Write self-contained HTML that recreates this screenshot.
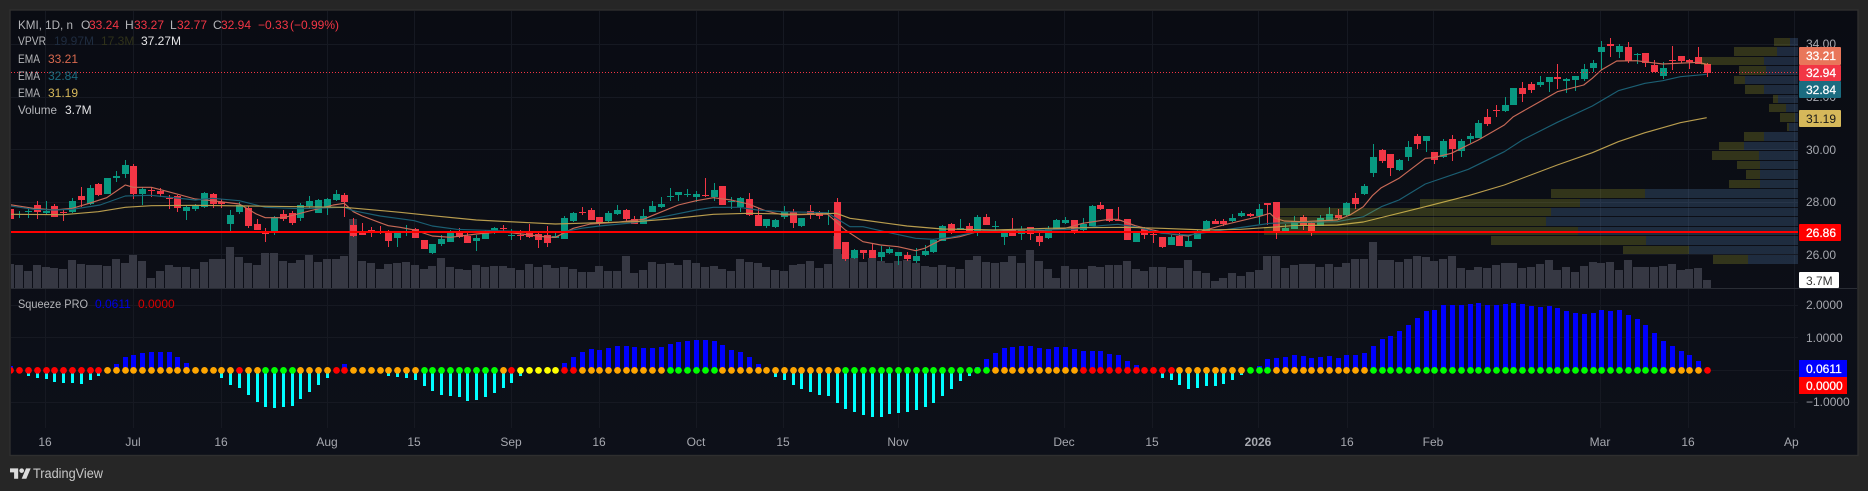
<!DOCTYPE html>
<html><head><meta charset="utf-8"><title>KMI chart</title>
<style>
html,body{margin:0;padding:0;background:#262626;width:1868px;height:491px;overflow:hidden}
svg{display:block}
text{font-family:"Liberation Sans",sans-serif;font-size:12px}
.a{fill:#a6a8af}
.l{fill:#b4b5b9}
.w{fill:#fff;stroke:#fff;stroke-width:.25}
</style></head>
<body>
<svg xmlns="http://www.w3.org/2000/svg" width="1868" height="491" viewBox="0 0 1868 491">
<defs>
<linearGradient id="bg" x1="0" y1="0" x2="0" y2="1"><stop offset="0" stop-color="#0a0c13"/><stop offset="1" stop-color="#0d1019"/></linearGradient>
<clipPath id="pane"><rect x="11" y="11" width="1846" height="444"/></clipPath>
</defs>
<rect width="1868" height="491" fill="#262626"/>
<rect x="10" y="10" width="1848" height="445.5" fill="url(#bg)" stroke="#2f2f2f" stroke-width="1.4"/>
<g id="grid" shape-rendering="crispEdges" stroke="#161922" stroke-width="1"></g>
<g id="main" clip-path="url(#pane)"></g>
<rect x="11" y="288" width="1846" height="1" fill="#2a2d35"/>
<line x1="11" x2="1798" y1="72.5" y2="72.5" stroke="#f23645" stroke-width="1" stroke-dasharray="1 2"/>
<rect x="11" y="231" width="1787" height="2" fill="#ff0000"/>
<g id="sub" clip-path="url(#pane)"></g>

<!-- Legend -->
<text x="18" y="29" class="l" textLength="55" lengthAdjust="spacingAndGlyphs">KMI, 1D, n</text>
<text x="81" y="29" class="l">O</text><text x="89" y="29" fill="#f23645">33.24</text>
<text x="125" y="29" class="l">H</text><text x="134" y="29" fill="#f23645">33.27</text>
<text x="170" y="29" class="l">L</text><text x="177" y="29" fill="#f23645">32.77</text>
<text x="213" y="29" class="l">C</text><text x="221" y="29" fill="#f23645">32.94</text>
<text x="258" y="29" fill="#f23645">−0.33</text><text x="290" y="29" fill="#f23645">(−0.99%)</text>
<text x="18" y="45" class="l" textLength="28" lengthAdjust="spacingAndGlyphs">VPVR</text>
<text x="54" y="45" fill="#1f2c40">19.97M</text><text x="101" y="45" fill="#30321a">17.3M</text><text x="141" y="45" fill="#e4e4e6">37.27M</text>
<text x="18" y="63" class="l" textLength="22" lengthAdjust="spacingAndGlyphs">EMA</text><text x="48" y="63" fill="#d8694f">33.21</text>
<text x="18" y="80" class="l" textLength="22" lengthAdjust="spacingAndGlyphs">EMA</text><text x="48" y="80" fill="#1b6c80">32.84</text>
<text x="18" y="97" class="l" textLength="22" lengthAdjust="spacingAndGlyphs">EMA</text><text x="48" y="97" fill="#d6b85a">31.19</text>
<text x="18" y="114" class="l" textLength="39" lengthAdjust="spacingAndGlyphs">Volume</text><text x="65" y="114" fill="#e4e4e6">3.7M</text>
<text x="18" y="308" class="l" textLength="70" lengthAdjust="spacingAndGlyphs">Squeeze PRO</text><text x="95" y="308" fill="#0000e6">0.0611</text><text x="138" y="308" fill="#d80000">0.0000</text>

<!-- Price axis -->
<text x="1806" y="48" class="a">34.00</text>
<text x="1806" y="101" class="a">32.00</text>
<text x="1806" y="154" class="a">30.00</text>
<text x="1806" y="206" class="a">28.00</text>
<text x="1806" y="259" class="a">26.00</text>
<rect x="1799" y="47" width="42" height="18" fill="#e9765a" rx="1"/><text x="1806" y="60" class="w">33.21</text>
<rect x="1799" y="65" width="42" height="16" fill="#f23645" rx="1"/><text x="1806" y="77" class="w">32.94</text>
<rect x="1799" y="81" width="42" height="17" fill="#1b6c80" rx="1"/><text x="1806" y="94" class="w">32.84</text>
<rect x="1799" y="110" width="42" height="17" fill="#d6b85a" rx="1"/><text x="1806" y="123" fill="#1a1a1a">31.19</text>
<rect x="1799" y="224" width="42" height="17" fill="#ff0000" rx="1"/><text x="1806" y="237" class="w">26.86</text>
<rect x="1799" y="272" width="40" height="16" fill="#ffffff" rx="1"/><text x="1806" y="285" fill="#333">3.7M</text>
<text x="1806" y="309" class="a">2.0000</text>
<text x="1806" y="342" class="a">1.0000</text>
<text x="1806" y="406" class="a">−1.0000</text>
<rect x="1799" y="360" width="48" height="17" fill="#0000ff"/><text x="1806" y="373" class="w">0.0611</text>
<rect x="1799" y="377" width="48" height="17" fill="#ff0000"/><text x="1806" y="390" class="w">0.0000</text>

<!-- Time axis -->
<g class="a" text-anchor="middle">
<text x="45" y="446" class="a">16</text>
<text x="133" y="446" class="a">Jul</text>
<text x="221" y="446" class="a">16</text>
<text x="327" y="446" class="a">Aug</text>
<text x="414" y="446" class="a">15</text>
<text x="511" y="446" class="a">Sep</text>
<text x="599" y="446" class="a">16</text>
<text x="696" y="446" class="a">Oct</text>
<text x="783" y="446" class="a">15</text>
<text x="898" y="446" class="a">Nov</text>
<text x="1064" y="446" class="a">Dec</text>
<text x="1152" y="446" class="a">15</text>
<text x="1258" y="446" class="a" font-weight="bold">2026</text>
<text x="1347" y="446" class="a">16</text>
<text x="1433" y="446" class="a">Feb</text>
<text x="1600" y="446" class="a">Mar</text>
<text x="1688" y="446" class="a">16</text>
</g>
<text x="1784" y="446" class="a">Ap</text>

<!-- Logo -->
<svg x="10" y="466" width="21" height="16.3" viewBox="0 0 36 28" fill="#dcdcdc"><path d="M14 22H7V11H0V4h14v18zM28 22h-8l7.5-18h8L28 22z"/><circle cx="20" cy="8" r="4"/></svg>
<text x="33" y="478" fill="#c8c8c8" style="font-size:13.5px" textLength="70" lengthAdjust="spacingAndGlyphs">TradingView</text>

<script>
(function(){
var NS="http://www.w3.org/2000/svg";
function el(p,n,a){var e=document.createElementNS(NS,n);for(var k in a)e.setAttribute(k,a[k]);p.appendChild(e);return e;}
function X(i){return Math.round(10.4+8.79*i);}
var grid=document.getElementById("grid"),main=document.getElementById("main"),sub=document.getElementById("sub");
[45,133,221,327,414,511,599,696,783,898,1064,1152,1258,1347,1433,1600,1688,1794].forEach(function(x){
 el(grid,"line",{x1:x+.5,x2:x+.5,y1:11,y2:288});el(grid,"line",{x1:x+.5,x2:x+.5,y1:289,y2:428});});
[44,97,149,202,254,305,337,370,402].forEach(function(y){el(grid,"line",{x1:11,x2:1798,y1:y+.5,y2:y+.5});});

/* volume */
var vols=[
[130,"402,405,423,405,411,414,417,390,402,405,405,408,387,399,375,393,444,423,405,411,411,417,396,387,387,351,381,399,405,369,369,393,399,390,375,396,387,387,378,267,393,399,417,402,399"],
[150,"336,345,357,348,324,351,357,360,345,351,348,348,354,360,342,351,345,354,351,357,366,366,348,363,363,318,369,360,336,342,339,345,330,339,351,348,357,363,327,336,339,351,360,363,345,342,333,354,342,258,312"],
[180,"234,246,234,243,249,243,240,249,258,261,255,261,267,240,228,246,249,246,228,249,210,243,267,294,258,267,267,258,261,255,255,243,267,273,261,261,264,264,240,273,279,303,294,279,288,276,270,228"],
[30,"678,714,705,702,702,711,702,711,699,687,687,636,690,690,696,687,678,681,693,687,678,714,720,711,714,705,699,699,714,711,702,690,720,711,726,708,696,699,696,720,690,711,711,711,708,702,720,717,714,750"]];
var gv=el(main,"g",{fill:"#363843","shape-rendering":"crispEdges"}),idx=0;
vols.forEach(function(s){s[1].split(",").forEach(function(v){var y=Math.round(s[0]+v/3);
 el(gv,"rect",{x:X(idx)-4,y:y,width:8,height:288-y});idx++;});});

/* candles: colour top bottom wickTop wickBottom */
var cs=[
[130,"r237,267,237,278 g251,255,243,265 g242,245,237,263 r225,245,213,266 g243,249,213,252 r228,260,222,262 r246,250,240,272 g213,245,205,250 r198,209,171,232 g174,222,165,225 r163,195,160,198 g144,192,144,192 g138,144,123,155 g105,132,90,144 r108,192,102,207 g178,192,171,225 r180,183,171,201 r183,192,174,201 r203,206,195,237 r198,234,195,246 g231,243,225,270 g226,237,222,243 g189,231,186,234 r192,222,189,234 r216,222,207,234 g255,282,240,303 g225,246,216,252 r234,288,228,294 r282,300,267,300 r309,312,294,336 g261,303,258,315 r252,267,240,273 r250,279,243,285 g225,264,219,273 g213,228,198,234 g210,249,207,249 g207,234,204,255 g192,210,180,213 r195,216,189,261 r285,318,264,321 r306,315,279,315 r300,306,291,321 r306,309,288,312 r309,333,300,351 g309,324,303,351"],
[150,"g245,247,225,258 r238,264,235,264 r270,297,270,297 g282,309,282,312 g267,282,255,288 g249,276,240,276 r249,261,234,264 r258,279,249,279 g264,273,255,303 g249,267,240,267 g234,249,231,252 r234,236,225,243 g255,258,237,270 r254,257,240,270 r249,261,222,264 r252,270,246,294 r255,279,228,291 g258,264,249,264 g204,267,198,267 g189,213,186,216 r186,189,171,195 r180,210,174,210 r201,219,201,228 g189,213,183,216 g180,192,165,195 r180,207,177,216 r207,222,198,222 g198,222,177,222 g168,186,153,186 g162,171,141,174 g138,141,114,153 g126,135,126,153 g132,135,117,141 g132,141,123,156 r135,138,84,141 g120,141,99,153 r108,165,108,165 g153,156,141,177 g144,171,141,186 r147,195,129,198 r195,228,174,228 g207,228,207,234 g210,231,207,234 g186,201,168,207 r186,219,177,234 g204,228,204,231 r183,195,165,207 r186,198,183,207 g189,192,180,225 r156,297,144,297"],
[180,"r186,237,186,243 g210,234,207,237 r210,219,210,237 r210,234,192,234 g216,231,198,243 g207,219,201,222 g216,228,216,255 r225,237,216,243 g228,243,205,249 g213,225,195,228 g180,216,177,219 g138,183,135,183 r132,156,129,162 g144,150,117,150 r138,153,129,156 g111,153,105,168 r111,135,102,135 g138,141,123,150 g156,171,150,195 r147,168,114,168 g147,162,138,180 r141,162,141,180 r168,186,156,198 g147,174,138,177 g120,150,117,150 g120,129,111,132 r120,156,120,162 g132,150,114,153 g78,138,75,138 r75,87,66,90 r87,123,87,126 r120,123,81,123 r117,180,117,180 g159,186,156,186 r147,165,141,177 r162,165,156,189 r171,201,171,204 g171,195,165,195 r168,198,159,198 g183,201,165,201 g159,177,150,177 g123,153,120,153 r123,132,117,132 r123,132,117,138 g114,123,102,126 g99,108,93,111 r102,108,99,111 g87,108,72,132 r69,75,69,135"],
[30,"r516,610,516,627 g594,603,582,603 g573,597,558,597 r561,588,555,600 r579,603,576,618 g564,588,555,588 g552,573,531,573 r555,564,537,570 g519,555,516,558 r504,522,489,537 g468,492,462,495 g381,429,342,441 r360,393,357,399 r372,414,372,438 g390,420,387,423 g351,381,333,393 r318,342,312,357 g318,333,318,366 r366,390,366,402 g333,381,327,384 r327,357,315,393 g333,363,327,381 g318,327,309,339 g279,324,270,324 r261,282,237,288 r240,243,225,261 g225,243,201,246 g174,225,174,225 r174,192,156,216 r162,180,156,189 g156,165,138,171 g141,156,141,186 r141,147,102,177 g147,152,144,189 g138,150,138,183 g117,147,102,153 g99,114,90,126 g51,66,33,120 r42,47,24,81 g48,66,42,84 r51,93,36,99 g72,75,69,102 r69,99,69,111 r105,126,90,126 g114,138,96,147 r90,93,48,120 r78,93,78,99 r90,96,87,117 r81,102,51,102 r102,129,99,141"]];
var gc=el(main,"g",{"shape-rendering":"crispEdges"});idx=0;
cs.forEach(function(s){s[1].split(" ").forEach(function(t){
 var c=t[0]=="g"?"#089981":"#f23645",p=t.slice(1).split(",").map(function(n){return Math.round(s[0]+n/3);}),x=X(idx);
 el(gc,"rect",{x:x,y:p[2],width:1,height:Math.max(1,p[3]-p[2]),fill:c});
 el(gc,"rect",{x:x-3,y:p[0],width:7,height:Math.max(1,p[1]-p[0]),fill:c});
 idx++;});});

/* EMA lines */
var ema=[
["#c96a57",[[0,130,"31,224 100,235 163,240 217,235 268,220 320,203 376,165 400,172 454,172 505,185 586,207 637,212 718,222 769,252 796,263 850,263 928,243 1000,225 1033,220 1060,245 1087,258 1140,278 1165,287 1200,292"],
 [400,150,"0,232 43,240 97,258 151,262 230,252 307,245 439,261 466,262 520,235 571,222 649,217 730,208 781,187 835,165 889,152 940,143 994,150 1045,162 1099,183 1150,195 1282,192 1336,240"],
 [820,180,"129,185 182,195 234,200 287,212 314,205 367,178 419,170 472,155 525,150 631,155 683,150 736,145 788,130 867,118 893,118 946,137 999,150 1052,162 1105,168 1157,150 1210,135 1315,110 1350,100"],
 [1250,30,"50,557 76,565 103,573 157,575 262,570 300,555 340,530 367,497 394,473 447,445 526,385 550,383 604,370 685,330 763,285 790,260 869,215 922,185 1001,165 1027,145 1054,120 1100,93 1159,92 1238,102 1344,97 1370,103"]]],
["#1b5f73",[[0,130,"31,228 100,238 163,240 217,238 300,225 376,198 454,196 530,204 586,210 637,205 718,212 796,232 901,236 1033,232 1060,242 1140,258 1200,266"],
 [400,150,"0,205 43,212 97,228 170,238 256,241 412,246 493,245 544,235 598,228 703,218 781,202 889,180 940,172 1018,172 1072,180 1150,185 1282,188 1350,230"],
 [820,180,"129,140 208,158 287,175 340,178 393,172 472,155 578,148 683,150 762,148 841,137 893,133 946,140 1025,160 1105,165 1210,150 1315,135 1350,130"],
 [1250,30,"52,578 130,578 262,575 340,560 394,530 447,510 526,462 655,418 763,365 817,330 922,277 1027,228 1105,182 1185,160 1238,152 1291,140 1370,133"]]],
["#b99d4e",[[0,130,"31,253 190,254 295,245 376,232 454,227 586,226 745,228 1033,232 1100,238 1200,247"],
 [400,150,"0,187 97,197 229,210 388,218 466,222 598,218 703,215 808,207 940,193 1045,190 1204,193 1309,190 1350,205"],
 [820,180,"129,120 261,138 367,147 525,150 683,145 788,143 920,142 1025,145 1157,150 1262,148 1350,142"],
 [1250,30,"130,587 262,585 340,576 526,530 655,497 763,465 922,405 1027,368 1105,335 1185,308 1291,278 1370,263"]]]];
ema.forEach(function(e,n){var pts=[],last=-1;e[1].forEach(function(s){s[2].split(" ").forEach(function(q){
 var a=q.split(","),x=s[0]+a[0]/3,y=s[1]+a[1]/3;if(x>last){pts.push(x.toFixed(1)+","+y.toFixed(1));last=x;}});});
 el(main,"polyline",{points:pts.join(" "),fill:"none",stroke:e[0],"stroke-width":1.15,"stroke-linejoin":"round"});});

/* volume profile */
var vp="38,46,1774,1790 47,56,1734,1777 57,65,1701,1764 66,75,1739,1766 76,84,1734,1745 85,94,1745,1764 95,103,1773,1778 104,112,1769,1786 113,122,1780,1795 123,131,1787,1789 132,141,1744,1764 142,150,1719,1744 151,160,1712,1759 161,169,1737,1760 170,179,1746,1760 180,188,1729,1760 189,198,1551,1645 199,207,1420,1580 208,216,1280,1551 217,226,1278,1546 227,235,1264,1578 236,245,1491,1646 246,254,1623,1689 255,264,1713,1748";
var gp=el(main,"g",{"shape-rendering":"crispEdges"});
vp.split(" ").forEach(function(r){var a=r.split(",").map(Number);
 el(gp,"rect",{x:a[2],y:a[0],width:a[3]-a[2],height:a[1]-a[0],fill:"rgb(210,212,50)","fill-opacity":.2});
 el(gp,"rect",{x:a[3],y:a[0],width:1798-a[3],height:a[1]-a[0],fill:"rgb(110,167,230)","fill-opacity":.2});});

/* squeeze histogram */
var hs=[[280,"258,0,288,294,297,306,309,309,312,300,288,0,252,231,225,219,216,216,216,231,249,0,0,0,294,315,324,345,366,381,384,381,378,357,336,315,294,0,252,0,0,0,0,288,291"],
[290,"264,270,288,303,315,318,321,333,330,321,309,294,279,258,0,0,0,0,219,201,186,177,180,174,168,168,171,174,174,171,162,156,153,150,150,153,165,180,186,201,222,0,261,270,285,297,306,315,318,339,357,366,375,381,381,372,369"],
[290,"366,360,351,339,318,297,273,258,231,207,189,174,171,168,168,174,177,171,171,177,183,183,183,192,195,213,225,0,0,264,270,285,297,294,288,288,282,270,255,0,229,208,204,201,195,198,204,201,198,204,195,195,189,168,147,138,123"],
[290,"105,84,63,60,45,45,45,42,39,45,45,42,39,42,48,51,48,54,63,69,72,69,60,63,60,75,87,105,129,153,168,183,195,213,0"]];
var gh=el(sub,"g",{"shape-rendering":"crispEdges"});idx=0;
hs.forEach(function(s){s[1].split(",").forEach(function(v){v=+v;if(v){var y=Math.round(s[0]+v/3),x=X(idx);
 if(y<370)el(gh,"rect",{x:x-2,y:y,width:5,height:370-y,fill:"#0000ff"});
 else el(gh,"rect",{x:x-1,y:370,width:3,height:y-370,fill:"#00ffff"});}idx++;});});

/* squeeze dots */
var col={r:"#ff0000",o:"#ffa500",g:"#00ff00",y:"#ffff00"};
"r0-10 o11-25 r26 o27-28 g29-32 o33-36 r37-38 o39-46 g47-55 o56 r57 y58-62 r63-64 o65-74 g75-80 o81-94 g95-111 o112-121 r122-132 o133-140 g141-143 o144-154 g155-188 o189-192 r193".split(" ").forEach(function(t){
 var a=t.slice(1).split("-").map(Number),e=a.length>1?a[1]:a[0];
 for(var i=a[0];i<=e;i++)el(sub,"circle",{cx:X(i)+.5,cy:370.4,r:3.4,fill:col[t[0]]});});
})();
</script>
</svg>
</body></html>
